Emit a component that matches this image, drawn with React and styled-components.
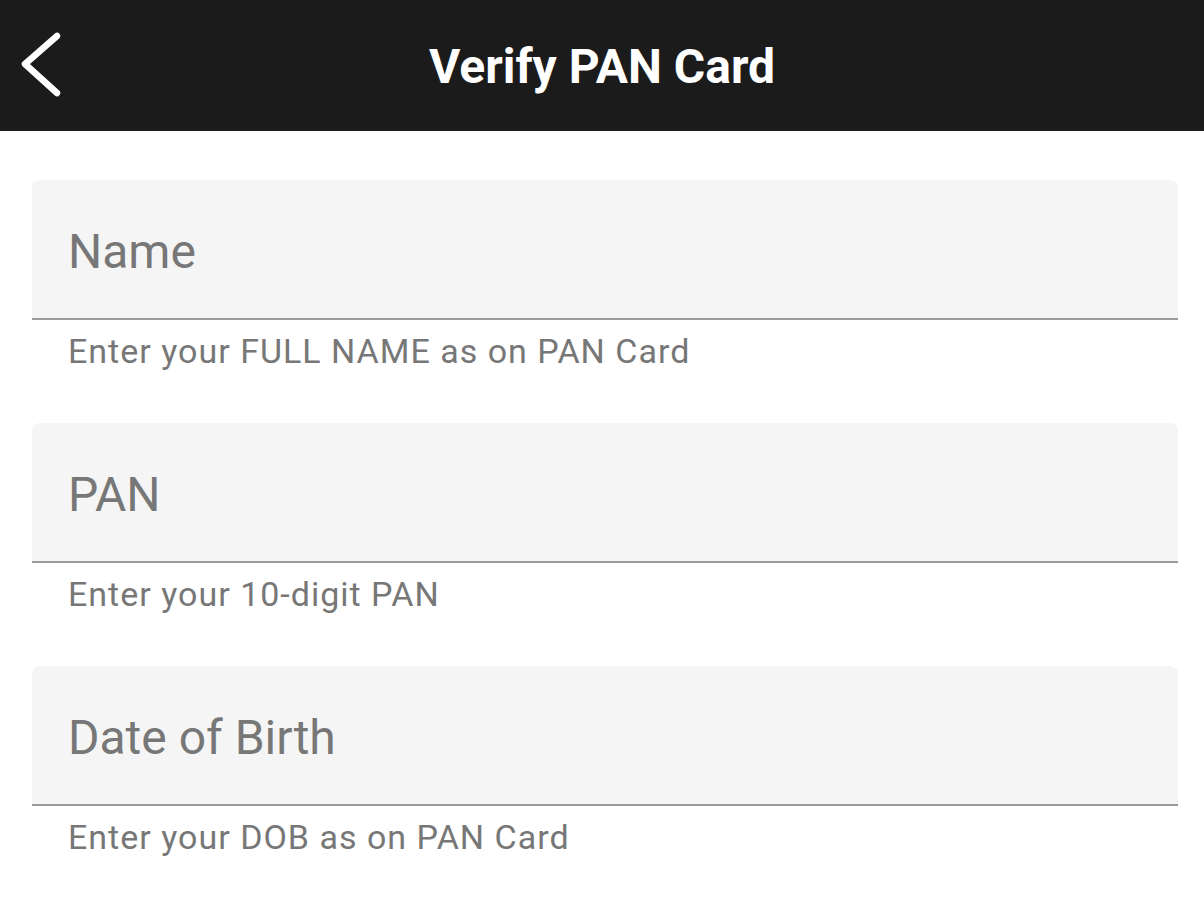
import React from 'react';
import styled, { createGlobalStyle } from 'styled-components';

const GlobalStyle = createGlobalStyle`
  html, body {
    margin: 0;
    padding: 0;
    background: #ffffff;
    font-family: Roboto, "Noto Sans", sans-serif;
  }
`;

const Page = styled.div`
  width: 1204px;
  min-height: 918px;
  background: #fff;
`;

const Header = styled.header`
  position: relative;
  height: 131px;
  background: #1b1b1b;
  display: flex;
  align-items: center;
  justify-content: center;
`;

const BackButton = styled.button`
  position: absolute;
  left: 14px;
  top: 26px;
  width: 56px;
  height: 76px;
  padding: 0;
  border: none;
  background: transparent;
  cursor: pointer;
  display: flex;
  align-items: center;
  justify-content: center;
`;

const Title = styled.h1`
  margin: 0;
  padding-top: 2px;
  color: #fff;
  font-size: 48px;
  font-weight: 700;
`;

const Form = styled.form`
  display: flex;
  flex-direction: column;
  gap: 52px;
  padding: 49px 26px 0 32px;
`;

const Group = styled.div`
  display: flex;
  flex-direction: column;
`;

const Field = styled.div`
  box-sizing: content-box;
  height: 134px;
  padding: 4px 36px 0;
  background: #f5f5f5;
  border-radius: 8px 8px 0 0;
  border-bottom: 2px solid #9a9a9a;
  display: flex;
  align-items: center;
`;

const Label = styled.span`
  color: #777777;
  font-size: 48px;
`;

const Helper = styled.div`
  margin-top: 11px;
  padding-left: 36px;
  color: #777777;
  font-size: 34px;
  line-height: 40px;
  letter-spacing: 1px;
`;

const fields = [
  { label: 'Name', helper: 'Enter your FULL NAME as on PAN Card' },
  { label: 'PAN', helper: 'Enter your 10-digit PAN' },
  { label: 'Date of Birth', helper: 'Enter your DOB as on PAN Card' },
];

export default function App() {
  return (
    <Page>
      <GlobalStyle />
      <Header>
        <BackButton type="button" aria-label="Back">
          <svg width="56" height="76" viewBox="0 0 56 76">
            <polyline
              points="43,10 11,38 43,67"
              fill="none"
              stroke="#fff"
              strokeWidth="6.5"
              strokeLinecap="round"
              strokeLinejoin="round"
            />
          </svg>
        </BackButton>
        <Title>Verify PAN Card</Title>
      </Header>
      <Form>
        {fields.map((f) => (
          <Group key={f.label}>
            <Field>
              <Label>{f.label}</Label>
            </Field>
            <Helper>{f.helper}</Helper>
          </Group>
        ))}
      </Form>
    </Page>
  );
}
